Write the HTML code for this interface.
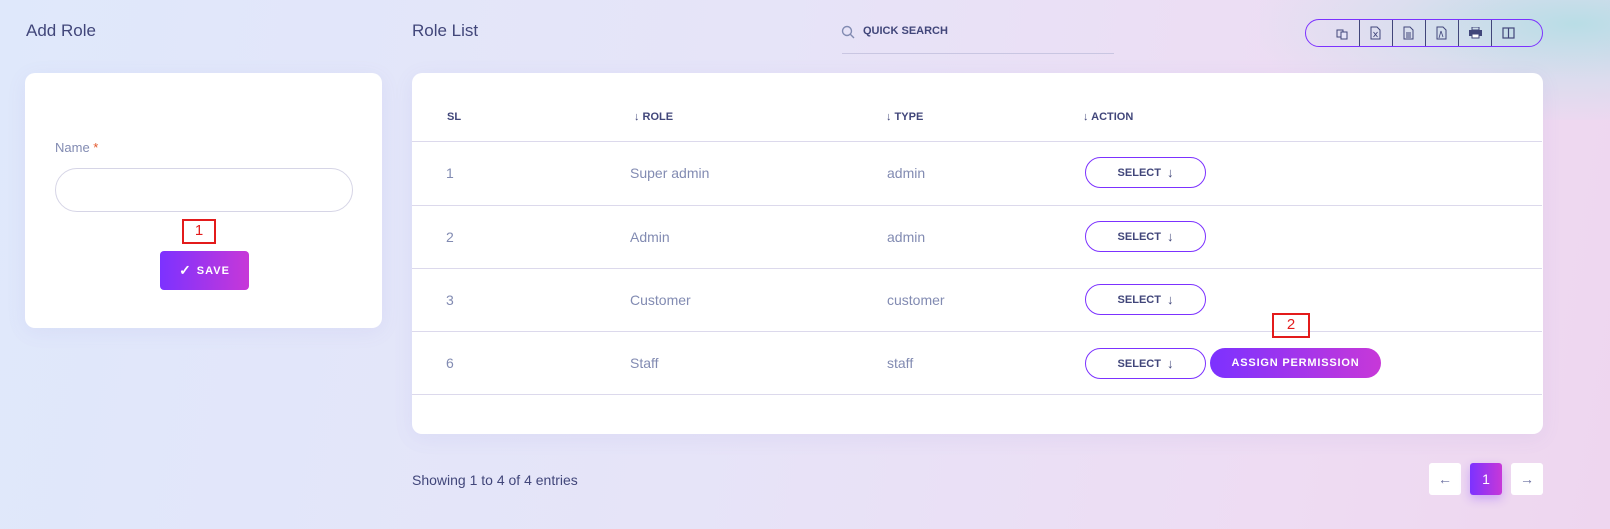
<!DOCTYPE html>
<html><head><style>
*{box-sizing:border-box;margin:0;padding:0}
body{width:1610px;height:529px;overflow:hidden;font-family:"Liberation Sans",sans-serif;position:relative;
background:linear-gradient(100deg,#dfe8fb 0%,#e6e4f8 45%,#eedcf3 80%,#eed6ef 100%);}
.tr{position:absolute;right:0;top:0;width:350px;height:120px;background:radial-gradient(ellipse at 90% 20%,#b9dde6 0%,rgba(200,225,235,0.5) 40%,rgba(0,0,0,0) 75%)}
.h{position:absolute;font-size:17px;color:#41467a;top:21px}
.card{position:absolute;background:#fff;border-radius:10px;box-shadow:0 4px 20px rgba(120,100,200,0.08)}
.lbl{position:absolute;font-size:13px;color:#828bb2}
.c{position:absolute;font-size:14px;color:#828bb2}
.th{position:absolute;font-size:11px;color:#41467a;font-weight:bold;top:111px}
.line{position:absolute;left:412px;width:1130px;height:1px;background:#dcd9ec}
.sel{position:absolute;left:1085px;width:121px;height:31px;border:1px solid #7c32ff;border-radius:16px;font-size:11px;color:#41467a;font-weight:bold;display:flex;align-items:center;justify-content:center;gap:6px}
.red{position:absolute;border:2px solid #e31b1b;color:#e31b1b;font-size:15px;text-align:center;line-height:20px}
.pg{position:absolute;top:463px;width:32px;height:32px;border-radius:3px;background:#fff;display:flex;align-items:center;justify-content:center;color:#6a6fa0;font-size:14px}
.grad{background:linear-gradient(90deg,#7c32ff,#c738d8) !important}
.tb{position:absolute;left:1305px;top:19px;width:238px;height:28px;border:1px solid #7c32ff;border-radius:14px}
.tb i{position:absolute;top:0;width:1px;height:26px;background:#41467a}
</style></head><body>
<div class="tr"></div>
<div class="h" style="left:26px">Add Role</div>
<div class="h" style="left:412px">Role List</div>
<svg style="position:absolute;left:841px;top:25px" width="14" height="14" viewBox="0 0 14 14"><circle cx="6" cy="6" r="4.5" fill="none" stroke="#828bb2" stroke-width="1.4"/><line x1="9.3" y1="9.3" x2="13" y2="13" stroke="#828bb2" stroke-width="1.4"/></svg>
<div style="position:absolute;left:863px;top:25px;font-size:11px;font-weight:bold;color:#41467a">QUICK SEARCH</div>
<div style="position:absolute;left:842px;top:53px;width:272px;height:1px;background:#c9c6e2"></div>
<div class="tb">
<i style="left:53px"></i><i style="left:86px"></i><i style="left:119px"></i><i style="left:152px"></i><i style="left:185px"></i>
<svg style="position:absolute;left:30px;top:7px" width="13" height="13" viewBox="0 0 13 13" fill="none" stroke="#41467a"><rect x="1" y="3" width="6" height="7"/><rect x="5" y="5" width="6" height="7" fill="#e6e4f8"/></svg>
<svg style="position:absolute;left:64px;top:6px" width="11" height="14" viewBox="0 0 11 14" fill="none" stroke="#41467a"><path d="M1 1h6l3 3v9H1z"/><path d="M3.5 6l4 5M7.5 6l-4 5" stroke-width=".9"/></svg>
<svg style="position:absolute;left:97px;top:6px" width="11" height="14" viewBox="0 0 11 14" fill="none" stroke="#41467a"><path d="M1 1h6l3 3v9H1z"/><path d="M3 7h5M3 9h5M3 11h5" stroke-width=".9"/></svg>
<svg style="position:absolute;left:130px;top:6px" width="11" height="14" viewBox="0 0 11 14" fill="none" stroke="#41467a"><path d="M1 1h6l3 3v9H1z"/><path d="M5 5l-2 7M5 5l2 6" stroke-width=".8"/></svg>
<svg style="position:absolute;left:163px;top:7px" width="13" height="12" viewBox="0 0 13 12"><rect x="3" y="0" width="7" height="3" fill="none" stroke="#41467a"/><rect x="0" y="3" width="13" height="6" fill="#41467a"/><rect x="3" y="7" width="7" height="4" fill="#fff" stroke="#41467a"/></svg>
<svg style="position:absolute;left:196px;top:7px" width="13" height="12" viewBox="0 0 13 12" fill="none" stroke="#41467a" stroke-width="1.2"><rect x="1" y="1" width="11" height="10"/><line x1="6.5" y1="1" x2="6.5" y2="11"/></svg>
</div>

<div class="card" style="left:25px;top:73px;width:357px;height:255px"></div>
<div class="lbl" style="left:55px;top:140px">Name <span style="color:#e3572b">*</span></div>
<div style="position:absolute;left:55px;top:168px;width:298px;height:44px;border:1px solid #d6d5e6;border-radius:22px;background:#fff"></div>
<div class="red" style="left:182px;top:219px;width:34px;height:25px">1</div>
<div class="grad" style="position:absolute;left:160px;top:251px;width:89px;height:39px;border-radius:4px;color:#fff;font-size:11px;font-weight:bold;letter-spacing:1px;display:flex;align-items:center;justify-content:center"><span style="font-size:14px;margin-right:5px">✓</span>SAVE</div>

<div class="card" style="left:412px;top:73px;width:1131px;height:361px"></div>
<div class="th" style="left:447px">SL</div>
<div class="th" style="left:634px">↓ ROLE</div>
<div class="th" style="left:886px">↓ TYPE</div>
<div class="th" style="left:1083px">↓ ACTION</div>
<div class="line" style="top:141px"></div>
<div class="line" style="top:205px"></div>
<div class="line" style="top:268px"></div>
<div class="line" style="top:331px"></div>
<div class="line" style="top:394px"></div>

<div class="c" style="left:446px;top:165px">1</div><div class="c" style="left:630px;top:165px">Super admin</div><div class="c" style="left:887px;top:165px">admin</div>
<div class="c" style="left:446px;top:229px">2</div><div class="c" style="left:630px;top:229px">Admin</div><div class="c" style="left:887px;top:229px">admin</div>
<div class="c" style="left:446px;top:292px">3</div><div class="c" style="left:630px;top:292px">Customer</div><div class="c" style="left:887px;top:292px">customer</div>
<div class="c" style="left:446px;top:355px">6</div><div class="c" style="left:630px;top:355px">Staff</div><div class="c" style="left:887px;top:355px">staff</div>

<div class="sel" style="top:157px">SELECT <span style="font-size:13px;font-weight:normal">↓</span></div>
<div class="sel" style="top:221px">SELECT <span style="font-size:13px;font-weight:normal">↓</span></div>
<div class="sel" style="top:284px">SELECT <span style="font-size:13px;font-weight:normal">↓</span></div>
<div class="sel" style="top:348px">SELECT <span style="font-size:13px;font-weight:normal">↓</span></div>
<div class="grad" style="position:absolute;left:1210px;top:348px;width:171px;height:30px;border-radius:15px;color:#fff;font-size:11px;font-weight:bold;letter-spacing:.8px;display:flex;align-items:center;justify-content:center">ASSIGN PERMISSION</div>
<div class="red" style="left:1272px;top:313px;width:38px;height:25px">2</div>

<div style="position:absolute;left:412px;top:472px;font-size:14px;color:#41467a">Showing 1 to 4 of 4 entries</div>
<div class="pg" style="left:1429px">←</div>
<div class="pg grad" style="left:1470px;color:#fff;box-shadow:0 4px 10px rgba(124,50,255,.3)">1</div>
<div class="pg" style="left:1511px">→</div>
</body></html>
